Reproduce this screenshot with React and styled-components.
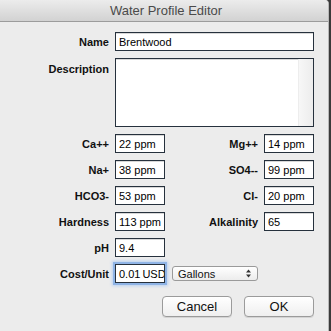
import React from "react";
import styled, { createGlobalStyle } from "styled-components";

const GlobalStyle = createGlobalStyle`
  html, body {
    margin: 0;
    padding: 0;
    background: #3a3a3a;
    width: 331px;
    height: 331px;
    overflow: hidden;
  }
  body {
    font-family: "Liberation Sans", Arial, sans-serif;
  }
`;

const Window = styled.div`
  width: 328px;
  height: 331px;
  background: #ececec;
  border-right: 1px solid #b8b8b8;
  border-top-right-radius: 4px;
  overflow: hidden;
`;

const TitleBar = styled.div`
  height: 21px;
  border-bottom: 1px solid #9c9c9c;
  background: linear-gradient(#ececec, #d2d2d2);
  display: flex;
  align-items: center;
  justify-content: center;
  font-size: 13px;
  color: #4a4a4a;
  padding-left: 4px;
`;

const Form = styled.div`
  display: grid;
  grid-template-columns: 109px 50px 87px 50px;
  column-gap: 6px;
  row-gap: 7px;
  padding-top: 10px;
`;

const Label = styled.label`
  grid-column: ${(p) => p.col || 1};
  font-size: 11px;
  font-weight: bold;
  color: #111;
  text-align: right;
  align-self: ${(p) => (p.top ? "start" : "center")};
  padding-top: ${(p) => (p.top ? "5px" : "0")};
  white-space: nowrap;
`;

const Field = styled.div`
  grid-column: ${(p) => p.span || "auto"};
  box-sizing: border-box;
  height: 19px;
  border: 1px solid #26313d;
  background: #fff;
  font-size: 11px;
  color: #000;
  padding: 0 3px;
  display: flex;
  align-items: center;
  white-space: nowrap;
  overflow: hidden;
  box-shadow: ${(p) =>
    p.focus ? "0 0 0 2px #8fb4e6, 0 0 3px 3px #b9d1f1" : "inset 0 1px 0 #d8d8d8"};
`;

const TextArea = styled(Field)`
  height: 69px;
  padding: 0;
  justify-content: flex-end;
  align-items: stretch;
`;

const Scroller = styled.div`
  width: 14px;
  border-left: 1px solid #ededed;
  background: linear-gradient(90deg, #f7f7f7, #ececec);
`;

const Caret = styled.span`
  display: inline-block;
  width: 1px;
  height: 14px;
  background: #000;
  margin: 0 1px;
`;

const CostCell = styled.div`
  grid-column: 3 / 5;
  display: flex;
  align-items: center;
  padding-left: 1px;
`;

const Popup = styled.div`
  box-sizing: border-box;
  width: 86px;
  height: 15px;
  border: 1px solid #9a9a9a;
  border-radius: 3px;
  background: linear-gradient(#ffffff, #ececec);
  font-size: 11px;
  color: #111;
  display: flex;
  align-items: center;
  justify-content: space-between;
  padding: 0 6px 0 5px;
`;

const ButtonRow = styled.div`
  display: flex;
  justify-content: flex-end;
  gap: 12px;
  padding: 13px 14px 0 0;
`;

const Button = styled.button`
  width: 70px;
  height: 21px;
  border: 1px solid #9b9b9b;
  border-radius: 4px;
  background: linear-gradient(#ffffff, #efefef);
  font-family: "Liberation Sans", Arial, sans-serif;
  font-size: 13px;
  color: #111;
  padding: 0;
  box-shadow: 0 1px 0 #d4d4d4;
`;

const UpDown = () => (
  <svg width="5" height="9" viewBox="0 0 5 9">
    <path d="M0 3.5 L2.5 0.5 L5 3.5 Z" fill="#333" />
    <path d="M0 5.5 L2.5 8.5 L5 5.5 Z" fill="#333" />
  </svg>
);

const pairs = [
  ["Ca++", "22 ppm", "Mg++", "14 ppm"],
  ["Na+", "38 ppm", "SO4--", "99 ppm"],
  ["HCO3-", "53 ppm", "Cl-", "20 ppm"],
  ["Hardness", "113 ppm", "Alkalinity", "65"],
];

export default function App() {
  return (
    <>
      <GlobalStyle />
      <Window>
        <TitleBar>Water Profile Editor</TitleBar>
        <Form>
          <Label>Name</Label>
          <Field span="2 / 5">Brentwood</Field>

          <Label top>Description</Label>
          <TextArea span="2 / 5">
            <Scroller />
          </TextArea>

          {pairs.map((p) => (
            <React.Fragment key={p[0]}>
              <Label>{p[0]}</Label>
              <Field>{p[1]}</Field>
              <Label col={3}>{p[2]}</Label>
              <Field>{p[3]}</Field>
            </React.Fragment>
          ))}

          <Label>pH</Label>
          <Field span="2 / 3">9.4</Field>

          <Label>Cost/Unit</Label>
          <Field focus>
            0.01<Caret />USD
          </Field>
          <CostCell>
            <Popup>
              Gallons
              <UpDown />
            </Popup>
          </CostCell>
        </Form>
        <ButtonRow>
          <Button>Cancel</Button>
          <Button>OK</Button>
        </ButtonRow>
      </Window>
    </>
  );
}
